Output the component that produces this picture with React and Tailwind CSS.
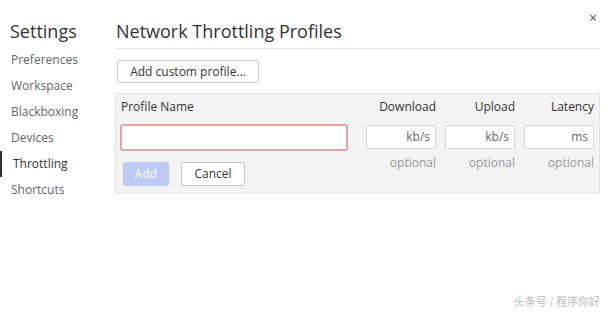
export default function App() {
  const font = { fontFamily: '"Open Sans", "Noto Sans", sans-serif' };
  const nav = ["Preferences", "Workspace", "Blackboxing", "Devices", "Throttling", "Shortcuts"];
  return (
    <div className="relative w-[608px] h-[313px] bg-white overflow-hidden flex text-[#333]" style={font}>
      <div className="w-[115px] shrink-0 pt-[18px]">
        <div className="pl-[10px] text-[18px] leading-[26px] text-[#333] h-[28px]">Settings</div>
        <div className="mt-[1px] flex flex-col">
          {nav.map((n) => (
            <div
              key={n}
              className={
                "h-[26px] flex items-center text-[12px] pl-[11px] " +
                (n === "Throttling" ? "text-[#333] border-l-2 border-[#333] pl-[9px]" : "text-[#666]")
              }
            >
              {n}
            </div>
          ))}
        </div>
      </div>
      <div className="flex-1 pr-[8px] pt-[18px]">
        <div className="text-[18px] leading-[26px] pl-[1px] pb-[4px] border-b border-[#e6e6e6] text-[#333]">
          Network Throttling Profiles
        </div>
        <div className="mt-[11px] pl-[2px]">
          <button className="h-[23px] w-[142px] border border-[#c8c8c8] rounded-[2px] bg-white text-[12px] text-[#333] flex items-center justify-center">
            Add custom profile...
          </button>
        </div>
        <div className="mt-[10px] h-[101px] bg-[#f3f3f3] border border-[#e4e4e4] px-[4px] pt-[3px]">
          <div className="flex text-[12px] text-[#333] h-[19px] items-center">
            <div className="w-[228px] pl-[1px]">Profile Name</div>
            <div className="w-[88px] text-right">Download</div>
            <div className="w-[79px] text-right">Upload</div>
            <div className="w-[79px] text-right">Latency</div>
          </div>
          <div className="flex mt-[8px] items-start">
            <div className="w-[228px] h-[27px] bg-white border-2 border-[#e0a6a6] rounded-[3px]" />
            <div className="ml-[18px] w-[70px] h-[24px] mt-[1px] bg-white border border-[#d8d8d8] text-[12px] text-[#666] flex items-center justify-end pr-[5px]">kb/s</div>
            <div className="ml-[9px] w-[70px] h-[24px] mt-[1px] bg-white border border-[#d8d8d8] text-[12px] text-[#666] flex items-center justify-end pr-[5px]">kb/s</div>
            <div className="ml-[9px] w-[70px] h-[24px] mt-[1px] bg-white border border-[#d8d8d8] text-[12px] text-[#666] flex items-center justify-end pr-[5px]">ms</div>
          </div>
          <div className="flex items-start">
            <div className="w-[228px] flex pl-[3px] pt-[11px] gap-[12px]">
              <button className="w-[46px] h-[24px] bg-[#bdcaf6] rounded-[2px] text-white text-[12px] flex items-center justify-center">Add</button>
              <button className="w-[64px] h-[24px] bg-white border border-[#c8c8c8] rounded-[2px] text-[#333] text-[12px] flex items-center justify-center">Cancel</button>
            </div>
            <div className="ml-[18px] w-[70px] text-right text-[12px] text-[#999] pt-[3px]">optional</div>
            <div className="ml-[9px] w-[70px] text-right text-[12px] text-[#999] pt-[3px]">optional</div>
            <div className="ml-[9px] w-[70px] text-right text-[12px] text-[#999] pt-[3px]">optional</div>
          </div>
        </div>
      </div>
      <div className="absolute right-[11px] top-[7px] text-[14px] text-[#555]">×</div>
      <div
        className="absolute right-[8px] bottom-[4px] text-[11px] text-[#bdbdbd]"
        style={{ fontFamily: '"Noto Sans CJK SC", sans-serif' }}
      >
        头条号 / 程序你好
      </div>
    </div>
  );
}
